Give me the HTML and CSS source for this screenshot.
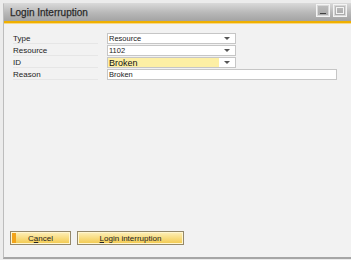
FILE: index.html
```html
<!DOCTYPE html>
<html>
<head>
<meta charset="utf-8">
<link rel="stylesheet" href="styles.css">
</head>
<body>
<div class="window">
  <div class="titlebar">
    <span class="title">Login Interruption</span>
    <div class="wbtns">
      <span class="wbtn min"><span class="minline"></span></span>
      <span class="wbtn max"><span class="maxbox"></span></span>
    </div>
  </div>
  <div class="accent"></div>
  <div class="content">
    <div class="form">
      <div class="row">
        <span class="label">Type</span>
        <div class="field combo"><span class="val">Resource</span><span class="arrow"></span></div>
      </div>
      <div class="row">
        <span class="label">Resource</span>
        <div class="field combo"><span class="val">1102</span><span class="arrow"></span></div>
      </div>
      <div class="row">
        <span class="label">ID</span>
        <div class="field combo focus"><span class="val big">Broken</span><span class="arrow"></span></div>
      </div>
      <div class="row">
        <span class="label">Reason</span>
        <div class="field wide"><span class="val">Broken</span></div>
      </div>
    </div>
    <div class="buttons">
      <button class="btn cancel">C<u>a</u>ncel</button>
      <button class="btn login"><u>L</u>ogin interruption</button>
    </div>
  </div>
</div>
</body>
</html>
```
FILE: styles.css
```css
html, body {
  margin: 0;
  padding: 0;
}
body {
  width: 351px;
  height: 260px;
  background: #ececec;
  font-family: "Liberation Sans", Arial, sans-serif;
  overflow: hidden;
}
.window {
  margin: 3px 0 0 3px;
  height: 253px;
  border-left: 1px solid #bdbdbd;
  border-top: 1px solid #d8d8d8;
  border-bottom: 2px solid #a6a6a6;
  background: #f2f2f2;
  display: flex;
  flex-direction: column;
}
.titlebar {
  height: 17px;
  display: flex;
  align-items: center;
  justify-content: space-between;
  background: linear-gradient(#d6d6d6, #b9b9b9 50%, #a3a3a3);
  padding: 0 4px 0 6px;
}
.title {
  font-size: 10px;
  color: #2a2a2a;
  -webkit-text-stroke: 0.25px #2a2a2a;
}
.wbtns {
  display: flex;
  gap: 3px;
  align-self: flex-start;
}
.wbtn {
  width: 12px;
  height: 11px;
  border: 1px solid #f4f4f4;
  background: linear-gradient(#bdbdbd, #a9a9a9);
  position: relative;
  box-shadow: inset 0 0 0 1px #d8d8d8;
}
.minline {
  position: absolute;
  left: 3px;
  right: 3px;
  bottom: 2px;
  height: 1px;
  background: #404040;
}
.maxbox {
  position: absolute;
  left: 2px;
  top: 2px;
  right: 2px;
  bottom: 2px;
  border: 1px solid #f4f4f4;
}
.accent {
  height: 2px;
  background: #f0b000;
  border-bottom: 1px solid #f8d888;
}
.content {
  flex: 1;
  display: flex;
  flex-direction: column;
  justify-content: space-between;
  padding: 9px 0 12px 6px;
}
.form {
  display: flex;
  flex-direction: column;
  gap: 1px;
}
.row {
  display: flex;
  align-items: stretch;
  height: 11px;
}
.label {
  width: 85px;
  margin-left: 3px;
  margin-right: 9px;
  font-size: 8px;
  line-height: 11px;
  color: #222;
  border-bottom: 1px solid #e6e6e6;
  box-sizing: border-box;
}
.field {
  box-sizing: border-box;
  border: 1px solid #c6c6c6;
  background: #ffffff;
  display: flex;
  align-items: center;
  position: relative;
}
.combo {
  width: 129px;
}
.wide {
  width: 230px;
}
.val {
  font-size: 7.5px;
  color: #222;
  padding-left: 1px;
  flex: 1;
}
.val.big {
  font-size: 9px;
  color: #111;
}
.focus .val {
  background: #fdefa4;
  height: 100%;
  display: flex;
  align-items: center;
}
.arrow {
  width: 16px;
  height: 100%;
  display: flex;
  align-items: center;
  justify-content: center;
}
.arrow::before {
  content: "";
  border-left: 3px solid transparent;
  border-right: 3px solid transparent;
  border-top: 3px solid #555;
}
.buttons {
  display: flex;
  gap: 6px;
  padding-left: 0;
}
.btn {
  height: 14px;
  padding: 0;
  border: 1px solid #94886a;
  background: linear-gradient(#fdf0bc, #f8dc80 50%, #f2c84c);
  font-family: "Liberation Sans", Arial, sans-serif;
  font-size: 8px;
  color: #222;
  box-shadow: inset 0 0 0 1px #fff6d0;
}
.cancel {
  width: 61px;
  background: linear-gradient(90deg, #f2a41a 0, #f2a41a 5px, transparent 5px),
              linear-gradient(#fdf0bc, #f8dc80 50%, #f2c84c);
}
.login {
  width: 107px;
}
```
